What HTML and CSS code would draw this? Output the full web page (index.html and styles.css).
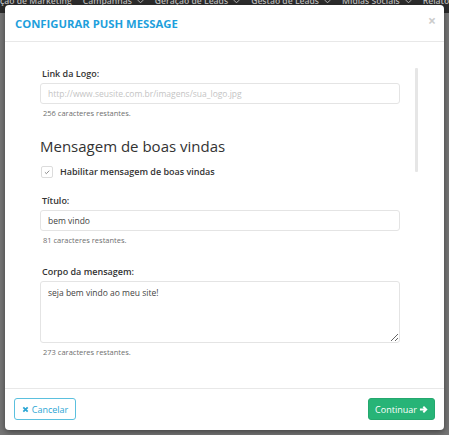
FILE: index.html
```html
<!DOCTYPE html>
<html lang="pt-BR">
<head>
<meta charset="utf-8">
<title>Configurar Push Message</title>
<link rel="stylesheet" href="styles.css">
</head>
<body>
<div class="page">
  <nav class="topnav">
    <span class="nav-item">ção de Marketing</span>
    <span class="nav-item">Campanhas <svg class="chev" viewBox="0 0 8 5"><path d="M1 1l3 3 3-3"/></svg></span>
    <span class="nav-item">Geração de Leads <svg class="chev" viewBox="0 0 8 5"><path d="M1 1l3 3 3-3"/></svg></span>
    <span class="nav-item">Gestão de Leads <svg class="chev" viewBox="0 0 8 5"><path d="M1 1l3 3 3-3"/></svg></span>
    <span class="nav-item">Mídias Sociais <svg class="chev" viewBox="0 0 8 5"><path d="M1 1l3 3 3-3"/></svg></span>
    <span class="nav-item">Relatórios</span>
  </nav>
</div>

<div class="modal">
  <header class="modal-header">
    <h4 class="modal-title">CONFIGURAR PUSH MESSAGE</h4>
    <span class="close">×</span>
  </header>

  <div class="modal-body">
    <form class="form">
      <div class="group group-first">
        <label class="form-label">Link da Logo:</label>
        <input class="form-input" type="text" placeholder="http://www.seusite.com.br/imagens/sua_logo.jpg">
        <div class="help">256 caracteres restantes.</div>
      </div>

      <h3 class="section-title">Mensagem de boas vindas</h3>

      <div class="check-row">
        <span class="checkbox"><svg viewBox="0 0 12 12"><path d="M3.5 6.3l1.8 1.7 3.4-3.6"/></svg></span>
        <span class="check-label">Habilitar mensagem de boas vindas</span>
      </div>

      <div class="group group-title">
        <label class="form-label">Título:</label>
        <input class="form-input" type="text" value="bem vindo">
        <div class="help">81 caracteres restantes.</div>
      </div>

      <div class="group group-body">
        <label class="form-label">Corpo da mensagem:</label>
        <textarea class="form-input form-textarea">seja bem vindo ao meu site!</textarea>
        <div class="help">273 caracteres restantes.</div>
      </div>
    </form>
    <div class="scrollbar"><div class="thumb"></div></div>
  </div>

  <footer class="modal-footer">
    <button class="btn btn-cancel" type="button">
      <svg class="ico-x" viewBox="0 0 8 8"><path d="M1.5 1.5l5 5M6.5 1.5l-5 5"/></svg>Cancelar
    </button>
    <button class="btn btn-continue" type="button">
      Continuar<svg class="ico-arrow" viewBox="0 0 10 10"><path d="M1 5h6.5M4.8 1.8L8 5 4.8 8.2"/></svg>
    </button>
  </footer>
</div>
</body>
</html>
```

FILE: styles.css
```css
* { box-sizing: border-box; }

html, body {
  margin: 0;
  padding: 0;
  height: 100%;
}

body {
  background: #767676;
  font-family: "Open Sans", "Liberation Sans", sans-serif;
  color: #333;
  overflow: hidden;
}

.page {
  height: 100%;
}

.topnav {
  height: 13px;
  background: #2c2c2c;
  overflow: hidden;
  display: flex;
  gap: 11px;
  white-space: nowrap;
  padding-left: 0;
}

.nav-item {
  display: flex;
  align-items: center;
  gap: 5px;
  margin-top: -5px;
  height: 12px;
  font-size: 8.6px;
  line-height: 12px;
  font-weight: 600;
  color: #bdbdbd;
}

.chev {
  width: 7px;
  height: 5px;
  fill: none;
  stroke: #bdbdbd;
  stroke-width: 1.1;
}

.modal {
  position: absolute;
  top: 5px;
  left: 5px;
  width: 439px;
  height: 425px;
  background: #fff;
  border-radius: 4px;
  box-shadow: 0 2px 6px rgba(0, 0, 0, 0.45);
  display: flex;
  flex-direction: column;
}

.modal-header {
  height: 37px;
  flex: none;
  padding: 0 8px 0 10px;
  border-bottom: 1px solid #e8e8e8;
  display: flex;
  align-items: center;
  justify-content: space-between;
}

.modal-title {
  margin: 0;
  font-size: 11.3px;
  font-weight: 700;
  color: #1e9fdc;
  letter-spacing: 0;
}

.close {
  font-size: 14px;
  font-weight: 700;
  color: #cccccc;
  line-height: 1;
  margin-top: -4px;
}

.modal-body {
  flex: 1;
  min-height: 0;
  display: flex;
  overflow: hidden;
}

.form {
  width: 360px;
  margin: 0 0 0 35px;
  padding-top: 26px;
}

.form-label {
  display: block;
  font-size: 9px;
  line-height: 12px;
  font-weight: 600;
  color: #333;
  margin-bottom: 3px;
  padding-left: 2px;
}

.form-input {
  display: block;
  width: 360px;
  height: 21px;
  margin: 0;
  padding: 0 7px;
  border: 1px solid #e4e4e4;
  border-radius: 3px;
  font-family: "Open Sans", "Liberation Sans", sans-serif;
  font-size: 8.5px;
  color: #444;
  background: #fff;
  outline: none;
}

.form-input::placeholder {
  color: #c4c4c4;
}

.form-textarea {
  height: 62px;
  padding: 5px 7px;
  line-height: 12px;
  resize: vertical;
}

.help {
  margin-top: 4px;
  padding-left: 3px;
  font-size: 7.5px;
  line-height: 10px;
  color: #6f6f6f;
}

.section-title {
  margin: 18px 0 0 0;
  font-size: 15px;
  line-height: 20px;
  font-weight: 400;
  color: #333;
}

.check-row {
  margin-top: 10px;
  height: 12px;
  display: flex;
  align-items: center;
  gap: 7px;
  padding-left: 1px;
}

.checkbox {
  width: 12px;
  height: 12px;
  border: 1px solid #dcdcdc;
  border-radius: 2px;
  display: flex;
}

.checkbox svg {
  width: 10px;
  height: 10px;
  fill: none;
  stroke: #777;
  stroke-width: 1;
}

.check-label {
  font-size: 9px;
  line-height: 12px;
  font-weight: 600;
  color: #333;
}

.group-title {
  margin-top: 17px;
}

.group-body {
  margin-top: 21px;
}

.scrollbar {
  margin-left: 15px;
  width: 3px;
  padding-top: 26px;
}

.thumb {
  width: 3px;
  height: 104px;
  background: #e6e6e6;
  border-radius: 1px;
}

.modal-footer {
  height: 42px;
  flex: none;
  border-top: 1px solid #e8e8e8;
  padding: 9px 9px 0 9px;
  display: flex;
  justify-content: space-between;
  align-items: flex-start;
}

.btn {
  height: 22px;
  border-radius: 3px;
  font-family: "Open Sans", "Liberation Sans", sans-serif;
  font-size: 9px;
  display: flex;
  align-items: center;
  justify-content: center;
  padding: 0;
  cursor: pointer;
}

.btn-cancel {
  width: 62px;
  background: #fff;
  border: 1px solid #5bc0de;
  color: #2ba6d4;
  gap: 3px;
}

.ico-x {
  width: 7px;
  height: 7px;
  fill: none;
  stroke: #2ba6d4;
  stroke-width: 2;
}

.btn-continue {
  width: 67px;
  background: #27b477;
  border: 1px solid #24a86e;
  color: #fff;
  gap: 2px;
}

.ico-arrow {
  width: 9px;
  height: 9px;
  fill: none;
  stroke: #fff;
  stroke-width: 2.2;
}
```
